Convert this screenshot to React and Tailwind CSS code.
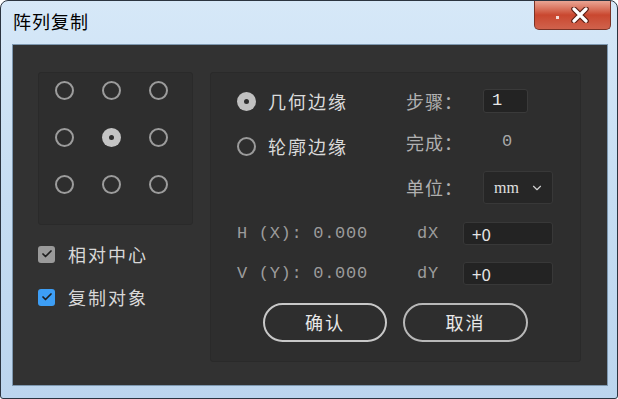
import React from 'react'
import { ChevronDown, Check } from 'lucide-react'

const cjk = { fontFamily: '"Noto Sans CJK SC", "Noto Sans", sans-serif' }
const mono = { fontFamily: '"Liberation Mono", "Noto Sans CJK SC", monospace' }

function Dot({ active }) {
  if (active) {
    return (
      <div className="w-[19px] h-[19px] rounded-full bg-[#c4c4c4] flex items-center justify-center">
        <div className="w-[5px] h-[5px] rounded-full bg-[#2e2e2e]"></div>
      </div>
    )
  }
  return <div className="w-[19px] h-[19px] rounded-full border-2 border-[#9c9c9c]"></div>
}

function Radio({ active, label }) {
  return (
    <div className="flex items-center h-[24px] gap-[12px]">
      {active ? (
        <div className="w-[19px] h-[19px] rounded-full bg-[#c0c0c0] flex items-center justify-center">
          <div className="w-[5px] h-[5px] rounded-full bg-[#2e2e2e]"></div>
        </div>
      ) : (
        <div className="w-[19px] h-[19px] rounded-full border-2 border-[#9a9a9a]"></div>
      )}
      <span className="text-[18px] tracking-[2px] text-[#dadada]" style={cjk}>{label}</span>
    </div>
  )
}

function CheckRow({ blue, label }) {
  return (
    <div className="flex items-center h-[20px] gap-[13px]">
      <div
        className={
          'w-[17px] h-[17px] rounded-[3px] flex items-center justify-center ' +
          (blue ? 'bg-[#3d9ef5]' : 'bg-[#9a9a9a]')
        }
      >
        <Check className="w-[12px] h-[12px] text-[#1e1e1e]" strokeWidth={3.5} />
      </div>
      <span className="text-[18px] tracking-[2px] text-[#d8d8d8]" style={cjk}>{label}</span>
    </div>
  )
}

export default function App() {
  const points = [0, 1, 2, 3, 4, 5, 6, 7, 8]
  return (
    <div className="w-[618px] h-[399px] bg-white">
      <div className="h-full rounded-t-[8px] rounded-b-[3px] border border-[#2b3440] bg-gradient-to-b from-[#d6e8f8] via-[#c6ddf2] to-[#bcd5ee] flex flex-col">
        <div className="h-[43px] flex justify-between">
          <div className="pl-[12px] pt-[9px] text-[18px] tracking-[1px] leading-[22px] text-black" style={cjk}>
            阵列复制
          </div>
          <div className="mr-[6px] w-[77px] h-[29px] rounded-b-[5px] border border-t-0 border-[#7a3326] bg-gradient-to-b from-[#e9a594] via-[#c9472f] to-[#d0624c] flex items-center justify-center gap-[12px]">
            <div className="w-[3px] h-[3px] bg-white/80 mt-[5px]"></div>
            <svg width="18" height="16" viewBox="0 0 18 16">
              <path d="M3 2 L15 14 M15 2 L3 14" stroke="#5a1e14" strokeWidth="5.5" strokeLinecap="round" />
              <path d="M3 2 L15 14 M15 2 L3 14" stroke="#ffffff" strokeWidth="3.2" strokeLinecap="round" />
            </svg>
          </div>
        </div>

        <div className="ml-[11px] mr-[9px] mb-[12px] flex-1 bg-[#323232] border border-[#7e98b0] pt-[27px] pl-[25px] flex gap-[17px]">
          <div className="w-[155px] flex flex-col">
            <div className="h-[153px] bg-[#2e2e2e] border border-[#2a2a2a] rounded-[3px] pl-[16px] pt-[8px]">
              <div className="grid grid-cols-[47px_47px_47px] gap-y-[28px]">
                {points.map((i) => (
                  <Dot key={i} active={i === 4} />
                ))}
              </div>
            </div>
            <div className="mt-[19px] flex flex-col gap-[23px]">
              <CheckRow label="相对中心" />
              <CheckRow blue label="复制对象" />
            </div>
          </div>

          <div className="w-[371px] h-[290px] bg-[#2e2e2e] border border-[#2a2a2a] rounded-[3px] pt-[16px] pl-[26px]">
            <div className="flex">
              <div className="w-[169px] flex flex-col gap-[21px]">
                <Radio active label="几何边缘" />
                <Radio label="轮廓边缘" />
              </div>
              <div className="grid grid-cols-[77px_auto] gap-y-[17px] items-center text-[18px] tracking-[1px] text-[#b0b0b0]" style={cjk}>
                <div className="h-[24px] flex items-center">步骤：</div>
                <div className="w-[45px] h-[24px] bg-[#232323] border border-[#3a3a3a] rounded-[3px] pl-[8px] flex items-center text-[17px] text-[#e8e8e8]" style={mono}>
                  1
                </div>
                <div className="h-[24px] flex items-center">完成：</div>
                <div className="h-[24px] pl-[19px] flex items-center text-[17px] text-[#a8a8a8]" style={mono}>
                  0
                </div>
                <div className="h-[33px] flex items-center">单位：</div>
                <div className="w-[70px] h-[33px] bg-[#262626] border border-[#383838] rounded-[3px] pl-[10px] pr-[8px] flex items-center justify-between">
                  <span className="text-[16px] tracking-[0px] text-[#e0e0e0]" style={{ fontFamily: '"Liberation Serif", serif' }}>
                    mm
                  </span>
                  <ChevronDown className="w-[14px] h-[14px] text-[#d0d0d0]" strokeWidth={2} />
                </div>
              </div>
            </div>

            <div className="mt-[18px] flex flex-col gap-[17px] text-[17px] tracking-[0.7px] text-[#9c9c9c]" style={mono}>
              <div className="flex items-center h-[23px]">
                <span className="w-[180px] whitespace-pre">H (X): 0.000</span>
                <span className="w-[46px]">dX</span>
                <div className="w-[90px] h-[23px] bg-[#232323] border border-[#383838] rounded-[3px] pl-[8px] flex items-center text-[17px] tracking-[0px] text-[#e6e6e6]" style={cjk}>
                  +0
                </div>
              </div>
              <div className="flex items-center h-[23px]">
                <span className="w-[180px] whitespace-pre">V (Y): 0.000</span>
                <span className="w-[46px]">dY</span>
                <div className="w-[90px] h-[23px] bg-[#232323] border border-[#383838] rounded-[3px] pl-[8px] flex items-center text-[17px] tracking-[0px] text-[#e6e6e6]" style={cjk}>
                  +0
                </div>
              </div>
            </div>

            <div className="mt-[18px] pl-[26px] flex gap-[16px]">
              <button className="w-[124px] h-[39px] rounded-full border-2 border-[#c8c8c8] text-[18px] tracking-[2px] text-[#e8e8e8]" style={cjk}>
                确认
              </button>
              <button className="w-[125px] h-[39px] rounded-full border-2 border-[#b8b8b8] text-[18px] tracking-[2px] text-[#e8e8e8]" style={cjk}>
                取消
              </button>
            </div>
          </div>
        </div>
      </div>
    </div>
  )
}
